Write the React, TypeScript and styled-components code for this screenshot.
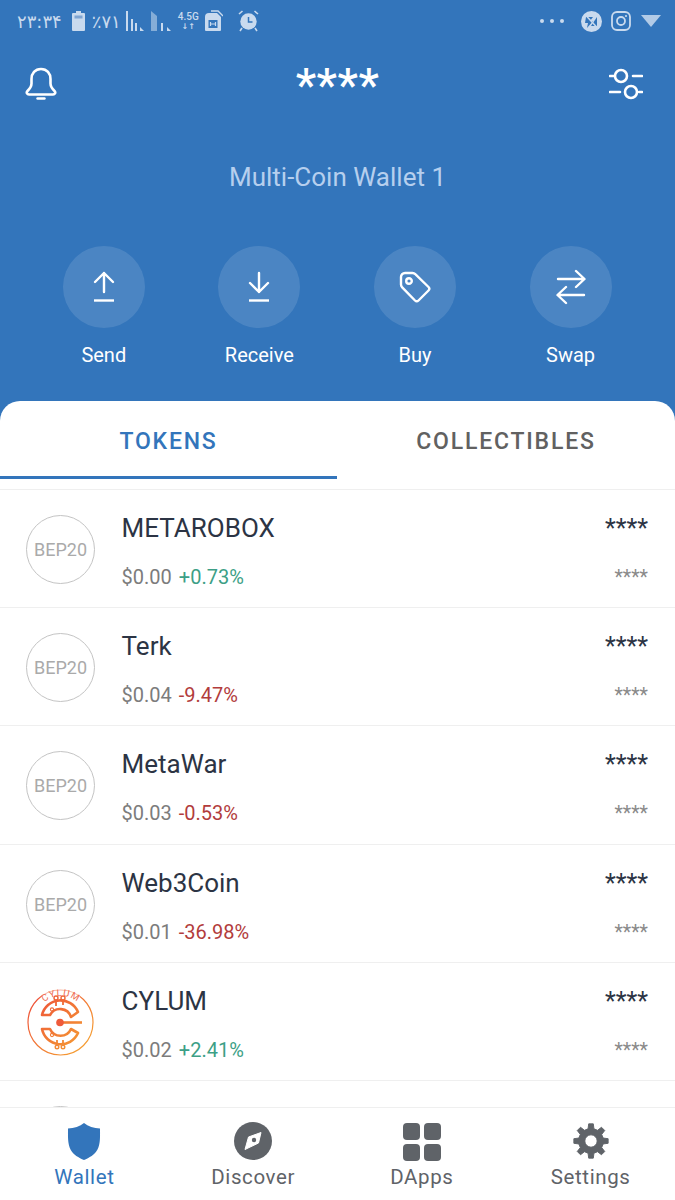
import styled, { createGlobalStyle } from 'styled-components';

const BLUE = '#3375bb';
const STATUS = '#c9daee';

const GlobalStyle = createGlobalStyle`
    html, body {
        margin: 0;
        padding: 0;
        background: #fff;
    }
    * {
        box-sizing: border-box;
    }
`;

const tokens = [
    { name: 'METAROBOX', price: '$0.00', change: '+0.73%' },
    { name: 'Terk', price: '$0.04', change: '-9.47%' },
    { name: 'MetaWar', price: '$0.03', change: '-0.53%' },
    { name: 'Web3Coin', price: '$0.01', change: '-36.98%' },
    { name: 'CYLUM', price: '$0.02', change: '+2.41%', logo: true },
];

const gearPath = () => {
    const teeth = 8;
    const cx = 20;
    const cy = 20;
    const points: string[] = [];
    for (let i = 0; i < teeth; i++) {
        const a = (i / teeth) * Math.PI * 2 - Math.PI / 2;
        const step = (Math.PI * 2) / teeth;
        const pts: [number, number][] = [
            [13.2, a - step * 0.3],
            [18.2, a - step * 0.17],
            [18.2, a + step * 0.17],
            [13.2, a + step * 0.3],
        ];
        pts.forEach(([r, t]) => {
            points.push(`${(cx + r * Math.cos(t)).toFixed(2)} ${(cy + r * Math.sin(t)).toFixed(2)}`);
        });
    }
    return `M${points.join('L')}Z M20 13.5a6.5 6.5 0 1 0 0 13a6.5 6.5 0 1 0 0-13Z`;
};

const StatusLeft = () => (
    <StatusGroup>
        <StatusTime>۲۳:۳۴</StatusTime>
        <svg width="15" height="22" viewBox="0 0 15 22">
            <path d="M5 1h5v2h3a1 1 0 0 1 1 1v16a1 1 0 0 1-1 1H2a1 1 0 0 1-1-1V4a1 1 0 0 1 1-1h3z" fill={STATUS} />
            <rect x="3.5" y="5.5" width="8" height="3" fill="#7ea4d2" />
        </svg>
        <StatusPercent>٪۷۱</StatusPercent>
        <svg width="47" height="22" viewBox="0 0 47 22">
            <g fill={STATUS}>
                <rect x="0" y="1" width="2" height="20" />
                <rect x="5" y="9" width="2" height="12" />
                <rect x="9" y="13" width="2" height="8" />
                <path d="M14 21v-4l4 4z" />
                <path d="M25 1l6 5v15h-6z" opacity="0.55" />
                <rect x="35" y="13" width="2" height="8" />
                <path d="M41 21v-4l4 4z" />
            </g>
        </svg>
        <NetworkBadge>
            <span>4.5G</span>
            <NetworkArrows>↓↑</NetworkArrows>
        </NetworkBadge>
        <svg width="19" height="22" viewBox="0 0 19 22">
            <path d="M5 3h8l4 4v13a1 1 0 0 1-1 1H2a1 1 0 0 1-1-1V7a4 4 0 0 1 4-4z" fill={STATUS} />
            <path d="M7 1h7l5 5" fill="none" stroke={STATUS} strokeWidth="1.4" />
            <rect x="4.5" y="10" width="9" height="8" fill={BLUE} />
            <path d="M6.5 12v4M11.5 12v4M6.5 14h5" stroke={STATUS} strokeWidth="1.2" />
        </svg>
        <AlarmSlot>
            <svg width="21" height="22" viewBox="0 0 21 22">
                <circle cx="10.5" cy="11.5" r="8.2" fill={STATUS} />
                <path d="M10.5 7v5h4" fill="none" stroke={BLUE} strokeWidth="1.5" />
                <path d="M1 4l3.5-3M20 4l-3.5-3M4 18l-2 3M17 18l2 3" stroke={STATUS} strokeWidth="1.6" />
            </svg>
        </AlarmSlot>
    </StatusGroup>
);

const StatusRight = () => (
    <StatusGroup>
        <StatusDots>
            <i />
            <i />
            <i />
        </StatusDots>
        <svg width="21" height="21" viewBox="0 0 21 21">
            <circle cx="10.5" cy="10.5" r="10.5" fill={STATUS} />
            <path d="M5 6h7l-3 4h3l-6 7 1-5H4z" fill={BLUE} />
            <path d="M10 15l6-9v9z" fill={BLUE} />
            <path d="M4 3.5l13 14" stroke={STATUS} strokeWidth="1.5" />
        </svg>
        <svg width="20" height="20" viewBox="0 0 20 20" style={{ marginLeft: 4 }}>
            <rect x="1" y="1" width="18" height="18" rx="5" fill="none" stroke={STATUS} strokeWidth="1.8" />
            <circle cx="10" cy="10" r="4" fill="none" stroke={STATUS} strokeWidth="1.8" />
            <circle cx="15" cy="5" r="1.1" fill={STATUS} />
        </svg>
        <svg width="20" height="12" viewBox="0 0 20 12" style={{ marginLeft: 5 }}>
            <path d="M0 0h20L10 12z" fill={STATUS} opacity="0.85" />
        </svg>
    </StatusGroup>
);

const BellIcon = () => (
    <svg width="32" height="34" viewBox="0 0 32 34" fill="none" stroke="#fff" strokeWidth="2.6" strokeLinejoin="round">
        <path d="M16 2c-6 0-9.5 4.5-9.5 10v4.5c0 3-1.5 5-4 7.5-1.5 1.5-.5 3.5 1.5 3.5h24c2 0 3-2 1.5-3.5-2.5-2.5-4-4.5-4-7.5V12C25.5 6.5 22 2 16 2z" />
        <path d="M12.5 31.5h7" strokeLinecap="round" strokeWidth="2.4" />
    </svg>
);

const SlidersIcon = () => (
    <svg width="34" height="34" viewBox="0 0 34 34" fill="none" stroke="#fff" strokeWidth="2.6" strokeLinecap="round">
        <circle cx="12" cy="9" r="6" />
        <circle cx="22" cy="25" r="6" />
        <path d="M1 9h4M24 9h9M1 25h10M30 25h3" />
    </svg>
);

const SendIcon = () => (
    <svg width="24" height="32" viewBox="0 0 24 32" fill="none" stroke="#fff" strokeWidth="2.4" strokeLinecap="round" strokeLinejoin="round">
        <path d="M12 2v19M3 11l9-9 9 9" />
        <path d="M2 29.5h20" strokeLinecap="butt" />
    </svg>
);

const ReceiveIcon = () => (
    <svg width="24" height="32" viewBox="0 0 24 32" fill="none" stroke="#fff" strokeWidth="2.4" strokeLinecap="round" strokeLinejoin="round">
        <path d="M12 2v19M3 12l9 9 9-9" />
        <path d="M2 29.5h20" strokeLinecap="butt" />
    </svg>
);

const TagIcon = () => (
    <svg width="32" height="32" viewBox="0 0 32 32" fill="none" stroke="#fff" strokeWidth="2.4" strokeLinejoin="round">
        <path d="M2 6a4 4 0 0 1 4-4h7.5a4 4 0 0 1 2.8 1.2L29.5 16a2.5 2.5 0 0 1 0 3.5L19.5 29.5a2.5 2.5 0 0 1-3.5 0L3.2 16.3A4 4 0 0 1 2 13.5z" />
        <circle cx="10" cy="10" r="2.8" />
    </svg>
);

const SwapIcon = () => (
    <svg width="30" height="36" viewBox="0 0 30 36" fill="none" stroke="#fff" strokeWidth="2.4" strokeLinecap="round" strokeLinejoin="round">
        <path d="M2 10h26M20 2l8.5 8-8.5 8" />
        <path d="M28 26H2M10 18l-8.5 8 8.5 8" />
    </svg>
);

const CylumLogo = () => (
    <svg width="70" height="70" viewBox="0 0 70 70" fill="none">
        <defs>
            <linearGradient id="cyl" gradientUnits="userSpaceOnUse" x1="10" y1="10" x2="60" y2="60">
                <stop offset="0" stopColor="#ee5238" />
                <stop offset="1" stopColor="#f5a033" />
            </linearGradient>
            <path id="cylArc" d="M12.500 21A26 26 0 0 1 57.500 21" />
        </defs>
        <circle cx="34.500" cy="34.500" r="32.500" stroke="url(#cyl)" strokeWidth="1.200" />
        <rect x="16" y="1" width="38" height="8" fill="#fff" opacity="0.55" />
        <text fontFamily="Roboto, sans-serif" fontSize="9.500" fill="#ee6a4e" letterSpacing="1" textAnchor="middle">
            <textPath href="#cylArc" startOffset="50%">CYLUM</textPath>
        </text>
        <g stroke="url(#cyl)" strokeLinejoin="round">
            <path d="M45 29A11.500 11.500 0 0 0 24 27H16A19 19 0 0 1 52 24ZM45 41A11.500 11.500 0 0 1 24 41H16A19 19 0 0 0 52 45Z" strokeWidth="2.600" />
            <path d="M34 34.500h22" strokeWidth="2.600" />
            <path d="M30 18v-6M37 17v-5M31 52v5M37 52v5" strokeWidth="1.800" />
            <circle cx="30" cy="10" r="2" strokeWidth="1.400" />
            <circle cx="37" cy="10" r="2" strokeWidth="1.400" />
            <circle cx="31" cy="59" r="1.800" strokeWidth="1.400" />
            <circle cx="37" cy="59" r="1.800" strokeWidth="1.400" />
            <circle cx="26" cy="21.500" r="1.600" strokeWidth="1.100" />
            <circle cx="26" cy="47" r="1.600" strokeWidth="1.100" />
        </g>
        <circle cx="34" cy="34.500" r="3.800" fill="#ef5a3a" />
    </svg>
);

const ShieldIcon = () => (
    <svg width="34" height="38" viewBox="0 0 34 38">
        <path d="M17 1c4 3.500 10 5 16 5.500 0 8 .5 15-2.500 21C28 32.500 22 36 17 38 12 36 6 32.500 3.500 27.500.5 21.500 1 14.500 1 6.500 7 6 13 4.500 17 1z" fill={BLUE} />
    </svg>
);

const CompassIcon = () => (
    <svg width="38" height="38" viewBox="0 0 38 38">
        <circle cx="19" cy="19" r="19" fill="#5f6368" />
        <path d="M27 10.500L24.500 21 11 27.500 14.500 15z" fill="#fff" stroke="#fff" strokeLinejoin="round" />
        <circle cx="20" cy="18" r="2.200" fill="#5f6368" />
    </svg>
);

const GridIcon = () => (
    <GridWrap>
        <i />
        <i />
        <i />
        <i />
    </GridWrap>
);

const GearIcon = () => (
    <svg width="38" height="38" viewBox="0 0 40 40">
        <path d={gearPath()} fill="#5f6368" fillRule="evenodd" stroke="#5f6368" strokeWidth="1" strokeLinejoin="round" />
    </svg>
);

const App = (): JSX.Element => {
    return (
        <Screen>
            <GlobalStyle />
            <Hero>
                <StatusBar>
                    <StatusLeft />
                    <StatusRight />
                </StatusBar>
                <TopRow>
                    <BellIcon />
                    <Balance>****</Balance>
                    <SlidersIcon />
                </TopRow>
                <WalletName>Multi-Coin Wallet 1</WalletName>
                <Actions>
                    <Action>
                        <ActionCircle><SendIcon /></ActionCircle>
                        Send
                    </Action>
                    <Action>
                        <ActionCircle><ReceiveIcon /></ActionCircle>
                        Receive
                    </Action>
                    <Action>
                        <ActionCircle><TagIcon /></ActionCircle>
                        Buy
                    </Action>
                    <Action>
                        <ActionCircle><SwapIcon /></ActionCircle>
                        Swap
                    </Action>
                </Actions>
            </Hero>
            <Sheet>
                <Tabs>
                    <Tab $active>TOKENS</Tab>
                    <Tab>COLLECTIBLES</Tab>
                </Tabs>
                <TokenList>
                    {tokens.map((token) => (
                        <TokenRow key={token.name}>
                            {token.logo ? <LogoSlot><CylumLogo /></LogoSlot> : <TokenBadge>BEP20</TokenBadge>}
                            <TokenInfo>
                                <TokenName>{token.name}</TokenName>
                                <TokenPrice>
                                    {token.price}
                                    <Change $up={token.change.startsWith('+')}>{token.change}</Change>
                                </TokenPrice>
                            </TokenInfo>
                            <TokenAmounts>
                                <AmountMain>****</AmountMain>
                                <AmountSub>****</AmountSub>
                            </TokenAmounts>
                        </TokenRow>
                    ))}
                    <TokenRow>
                        <TokenBadge />
                    </TokenRow>
                </TokenList>
                <BottomNav>
                    <NavItem $active>
                        <ShieldIcon />
                        Wallet
                    </NavItem>
                    <NavItem>
                        <CompassIcon />
                        Discover
                    </NavItem>
                    <NavItem>
                        <GridIcon />
                        DApps
                    </NavItem>
                    <NavItem>
                        <GearIcon />
                        Settings
                    </NavItem>
                </BottomNav>
            </Sheet>
        </Screen>
    );
};

const Screen = styled.div`
    background: ${BLUE};
    display: flex;
    flex-direction: column;
    font-family: Roboto, 'Liberation Sans', sans-serif;
    height: 1200px;
    overflow: hidden;
    width: 675px;
`;

const Hero = styled.div`
    color: #fff;
    display: flex;
    flex: none;
    flex-direction: column;
    height: 401px;
`;

const StatusBar = styled.div`
    align-items: center;
    display: flex;
    height: 42px;
    justify-content: space-between;
    padding: 0 14px 0 17px;
`;

const StatusGroup = styled.div`
    align-items: center;
    color: ${STATUS};
    display: flex;
    gap: 5px;
`;

const StatusTime = styled.span`
    font-family: 'DejaVu Sans', sans-serif;
    font-size: 18px;
    margin-right: 4px;
`;

const StatusPercent = styled.span`
    font-family: 'DejaVu Sans', sans-serif;
    font-size: 18px;
    margin-left: 1px;
`;

const NetworkBadge = styled.div`
    display: flex;
    flex-direction: column;
    font-size: 10px;
    font-weight: 500;
    line-height: 11px;
    text-align: center;
`;

const NetworkArrows = styled.span`
    font-family: 'DejaVu Sans', sans-serif;
    font-size: 8px;
    font-weight: 700;
    line-height: 9px;
`;

const AlarmSlot = styled.div`
    display: flex;
    margin-left: 10px;
`;

const StatusDots = styled.div`
    display: flex;
    gap: 6px;
    margin-right: 12px;
    margin-top: -1px;

    i {
        background: ${STATUS};
        border-radius: 50%;
        display: block;
        height: 4px;
        width: 4px;
    }
`;

const TopRow = styled.div`
    align-items: center;
    display: flex;
    height: 84px;
    justify-content: space-between;
    padding: 0 32px 0 25px;
`;

const Balance = styled.div`
    font-size: 46px;
    font-weight: 500;
    letter-spacing: 0.5px;
    line-height: 44px;
    margin-left: 9px;
    padding-top: 2px;
`;

const WalletName = styled.div`
    color: #b6cfee;
    font-size: 26px;
    line-height: 32px;
    margin-top: 35px;
    text-align: center;
`;

const Actions = styled.div`
    display: grid;
    grid-template-columns: repeat(4, 155.6px);
    margin-top: 53px;
    padding-left: 26px;
`;

const Action = styled.div`
    align-items: center;
    display: flex;
    flex-direction: column;
    font-size: 20px;
    gap: 15px;
    line-height: 24px;
`;

const ActionCircle = styled.div`
    align-items: center;
    background: rgba(255, 255, 255, 0.12);
    border-radius: 50%;
    display: flex;
    height: 82px;
    justify-content: center;
    width: 82px;
`;

const Sheet = styled.div`
    background: #fff;
    border-radius: 20px 20px 0 0;
    display: flex;
    flex: 1;
    flex-direction: column;
    min-height: 0;
`;

const Tabs = styled.div`
    border-bottom: 1px solid #efefef;
    display: grid;
    flex: none;
    grid-template-columns: 337px 1fr;
    height: 89px;
    padding-bottom: 10px;
`;

const Tab = styled.div<{ $active?: boolean }>`
    align-items: center;
    border-bottom: 3px solid ${(p) => (p.$active ? BLUE : 'transparent')};
    color: ${(p) => (p.$active ? BLUE : '#616161')};
    display: flex;
    font-size: 23px;
    font-weight: 500;
    justify-content: center;
    letter-spacing: 1.8px;
    padding-top: 6px;
`;

const TokenList = styled.div`
    flex: 1;
    min-height: 0;
    overflow: hidden;
`;

const TokenRow = styled.div`
    align-items: flex-start;
    border-bottom: 1px solid #efefef;
    display: flex;
    height: 118.2px;
    padding: 25px 27px 0 26px;
`;

const TokenBadge = styled.div`
    align-items: center;
    border: 1px solid #c4c4c4;
    border-radius: 50%;
    color: #aaaaaa;
    display: flex;
    flex: none;
    font-size: 18px;
    height: 69px;
    justify-content: center;
    width: 69px;
`;

const LogoSlot = styled.div`
    flex: none;
    height: 69px;
    width: 69px;
`;

const TokenInfo = styled.div`
    display: flex;
    flex: 1;
    flex-direction: column;
    margin-left: 26.6px;
    margin-top: -2px;
`;

const TokenName = styled.div`
    color: #2c3444;
    font-size: 26px;
    line-height: 30px;
`;

const TokenPrice = styled.div`
    color: #7c7c7c;
    font-size: 20px;
    line-height: 24px;
    margin-top: 22px;
`;

const Change = styled.span<{ $up: boolean }>`
    color: ${(p) => (p.$up ? '#3d9f86' : '#b23c3c')};
    margin-left: 7px;
`;

const TokenAmounts = styled.div`
    align-items: flex-end;
    display: flex;
    flex-direction: column;
`;

const AmountMain = styled.div`
    color: #2c3444;
    font-size: 25px;
    line-height: 24px;
    margin-top: 2px;
`;

const AmountSub = styled.div`
    color: #8a8a8a;
    font-size: 19.5px;
    line-height: 20px;
    margin-top: 27px;
`;

const BottomNav = styled.div`
    background: #fff;
    border-top: 1px solid #efefef;
    display: grid;
    flex: none;
    grid-template-columns: repeat(4, 168.75px);
    height: 93px;
    padding: 14px 0 0;
`;

const NavItem = styled.div<{ $active?: boolean }>`
    align-items: center;
    color: ${(p) => (p.$active ? BLUE : '#5f6368')};
    display: flex;
    flex-direction: column;
    font-size: 20.5px;
    gap: 5px;
    letter-spacing: 0.6px;
    line-height: 24px;
`;

const GridWrap = styled.div`
    display: grid;
    gap: 4px;
    grid-template-columns: 17px 17px;
    grid-template-rows: 17px 17px;
    height: 38px;
    padding: 1px 0;

    i {
        background: #5f6368;
        border-radius: 4px;
        display: block;
    }
`;

export default App;
